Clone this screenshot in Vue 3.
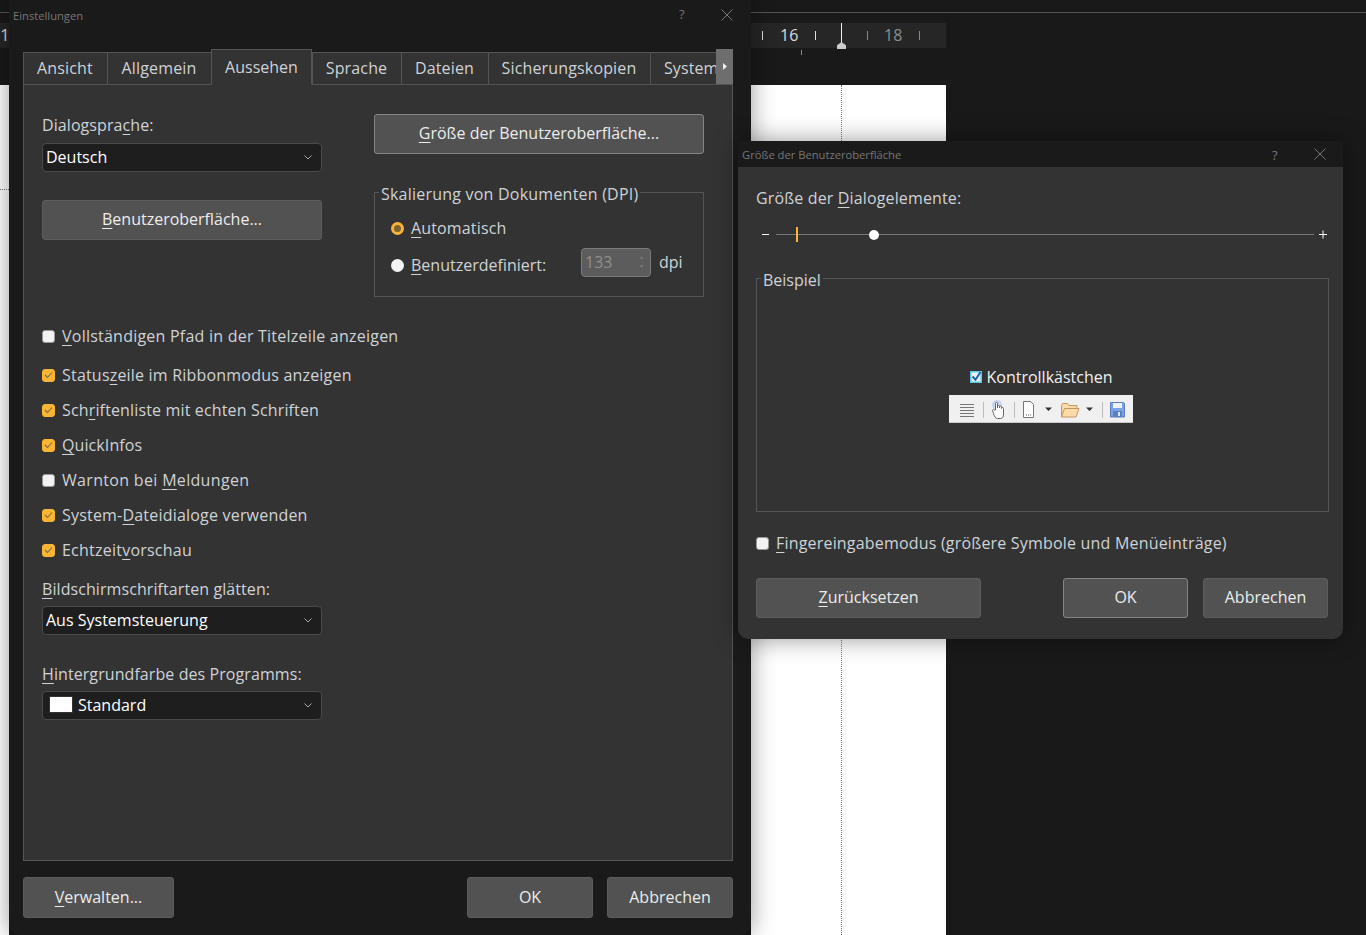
<script setup>
const tabs = [
  { label: 'Ansicht', w: 84 },
  { label: 'Allgemein', w: 104 },
  { label: 'Aussehen', w: 101, active: true },
  { label: 'Sprache', w: 89 },
  { label: 'Dateien', w: 87 },
  { label: 'Sicherungskopien', w: 162 },
  { label: 'System', w: 66, clip: true }
]
const checks = [
  { pre: 'Status', u: 'z', post: 'eile im Ribbonmodus anzeigen', on: true, ls: 0.2 },
  { pre: 'Sch', u: 'r', post: 'iftenliste mit echten Schriften', on: true, ls: 0.15 },
  { pre: '', u: 'Q', post: 'uickInfos', on: true, ls: 0.1 },
  { pre: 'Warnton bei ', u: 'M', post: 'eldungen', on: false, ls: 0.32 },
  { pre: 'System-', u: 'D', post: 'ateidialoge verwenden', on: true, ls: 0.2 },
  { pre: 'Echtzeit', u: 'v', post: 'orschau', on: true, ls: 0.23 }
]
</script>

<template>
  <div class="desk">
    <div class="topline"></div>
    <div class="ruler left-ruler"><span>1</span></div>
    <div class="page left-page"><i class="hdots"></i></div>

    <div class="topline right-line"></div>
    <div class="ruler main-ruler">
      <i class="tk" style="left:11px"></i><span class="num" style="left:29px">16</span>
      <i class="tk" style="left:64px"></i><i class="cursor"></i><i class="marker"></i>
      <i class="tk dim" style="left:116px"></i><span class="num dim" style="left:133px">18</span>
      <i class="tk dim" style="left:168px"></i>
    </div>
    <i class="undertick"></i>
    <div class="page main-page"><i class="vdots"></i></div>

    <section class="win settings">
      <header class="titlebar">
        <span class="title">Einstellungen</span>
        <span class="help">?</span>
        <svg class="close" width="12" height="12" viewBox="0 0 12 12"><path d="M.5.5l11 11M11.5.5l-11 11" stroke="#777" fill="none"/></svg>
      </header>

      <nav class="tabs">
        <div v-for="t in tabs" :key="t.label" class="tab" :class="{ active: t.active, clip: t.clip }" :style="{ width: t.w + 'px' }"><span>{{ t.label }}</span></div>
        <div class="tabscroll"><svg width="4" height="7" viewBox="0 0 4 7"><path d="M0 0l4 3.500-4 3.500z" fill="#eee"/></svg></div>
      </nav>

      <div class="pane">
        <div class="toprow">
          <div class="col-left">
            <label class="lbl">Dialogspra<u>c</u>he:</label>
            <div class="select lang">Deutsch<svg class="chev" width="8" height="5" viewBox="0 0 8 5"><path d="M.5.5L4 4 7.5.5" stroke="#aaa" fill="none"/></svg></div>
            <button class="btn ui-btn"><u>B</u>enutzeroberfläche...</button>
          </div>
          <div class="col-right">
            <button class="btn default size-btn"><u>G</u>röße der Benutzeroberfläche...</button>
            <fieldset class="group dpi">
              <legend>Skalierung von Dokumenten (DPI)</legend>
              <div class="radio-row first"><i class="radio on"></i><span><u>A</u>utomatisch</span></div>
              <div class="radio-row second">
                <i class="radio"></i><span class="custom"><u>B</u>enutzerdefiniert:</span>
                <div class="spin">133<svg width="7" height="20" viewBox="0 0 7 20"><path d="M1 7l2.500-3L6 7zM1 13l2.500 3L6 13z" fill="#727272"/></svg></div>
                <span class="unit">dpi</span>
              </div>
            </fieldset>
          </div>
        </div>

        <div class="check-row path"><i class="check"></i><span><u>V</u>ollständigen Pfad in der Titelzeile anzeigen</span></div>
        <div class="checks">
          <div v-for="c in checks" :key="c.pre + c.u" class="check-row" :style="{ letterSpacing: c.ls + 'px' }">
            <i class="check" :class="{ on: c.on }"><svg v-if="c.on" width="9" height="8" viewBox="0 0 9 8"><path d="M1 4l2.500 2.500L8 1.500" stroke="#7a6a45" stroke-width="1.100" fill="none"/></svg></i>
            <span>{{ c.pre }}<u>{{ c.u }}</u>{{ c.post }}</span>
          </div>
        </div>

        <label class="lbl smooth"><u>B</u>ildschirmschriftarten glätten:</label>
        <div class="select wide">Aus Systemsteuerung<svg class="chev" width="8" height="5" viewBox="0 0 8 5"><path d="M.5.5L4 4 7.5.5" stroke="#aaa" fill="none"/></svg></div>

        <label class="lbl bgc"><u>H</u>intergrundfarbe des Programms:</label>
        <div class="select wide"><i class="swatch"></i>Standard<svg class="chev" width="8" height="5" viewBox="0 0 8 5"><path d="M.5.5L4 4 7.5.5" stroke="#aaa" fill="none"/></svg></div>
      </div>

      <footer class="foot">
        <button class="btn manage"><u>V</u>erwalten...</button>
        <span class="spacer"></span>
        <button class="btn ok">OK</button>
        <button class="btn ok">Abbrechen</button>
      </footer>
    </section>

    <section class="win sizer">
      <header class="titlebar small">
        <span class="title">Größe der Benutzeroberfläche</span>
        <span class="help">?</span>
        <svg class="close" width="12" height="12" viewBox="0 0 12 12"><path d="M.5.5l11 11M11.5.5l-11 11" stroke="#777" fill="none"/></svg>
      </header>
      <div class="sizer-body">
        <label class="lbl sz">Größe der <u>D</u>ialogelemente:</label>
        <div class="slider">
          <i class="minus"></i>
          <div class="track"><i class="mark"></i><i class="thumb"></i></div>
          <svg width="9" height="9" viewBox="0 0 9 9"><path d="M0 4.500h8M4 .5v8" stroke="#fff" fill="none"/></svg>
        </div>
        <fieldset class="group sample">
          <legend>Beispiel</legend>
          <div class="sample-in">
            <div class="sample-check">
              <svg width="12" height="12" viewBox="0 0 12 12"><rect width="12" height="12" fill="#5cc8ec"/><rect x="1.500" y="1.500" width="9" height="9" fill="#e8f6fb"/><path d="M2.500 5.500l3 3.200L10.500 1" stroke="#1f5fa8" stroke-width="2" fill="none"/></svg>
              <span>Kontrollkästchen</span>
            </div>
            <svg class="toolbar" width="184" height="28" viewBox="0 0 184 28">
              <rect width="184" height="28" fill="#f0f0f0"/>
              <rect y="27" width="184" height="1" fill="#c9c9c9"/>
              <path d="M11 9.500h14M11 12.500h14M11 15.500h14M11 18.500h14M11 21.500h14" stroke="#777" fill="none"/>
              <path d="M34.500 7v16M65.500 7v16M153.500 7v16" stroke="#bbb" fill="none"/>
              <circle cx="48" cy="10" r="5" fill="#c8d4f4"/>
              <path d="M46.500 15V8.500a1 1 0 012 0V13v-1.500a1 1 0 012 0V13v-1a1 1 0 012 0v1.500a1 1 0 012 0V19c0 3-1 4.500-3 4.500h-3c-2 0-3-2-4-5l-1-3c0-1 1-1.500 2-.5z" fill="#fff" stroke="#666"/>
              <path d="M74.500 6.500h7l3 3v13h-10z" fill="#fff" stroke="#777"/>
              <path d="M77 20h1M79 20h1M81 20h1" stroke="#555"/>
              <path d="M96 12.500h7l-3.500 3.500zM137 12.500h7l-3.500 3.500z" fill="#333"/>
              <path d="M112.500 22V10.500l1-2h5l1.500 2h8v3M112.500 22l3-8.500h14.500l-3 8.500z" fill="#fbdca8" stroke="#c49660"/>
              <path d="M161.500 7.500h13l1 1v13.500h-14z" fill="#7ba3e4" stroke="#5c7fc2"/>
              <rect x="164" y="8" width="9" height="5" fill="#eef2fb"/>
              <rect x="164" y="16" width="9" height="6" fill="#5c7fc2"/>
              <rect x="169" y="17" width="2" height="4" fill="#dfe7f5"/>
            </svg>
          </div>
        </fieldset>
        <div class="check-row finger"><i class="check"></i><span><u>F</u>ingereingabemodus (größere Symbole und Menüeinträge)</span></div>
        <div class="sizer-foot">
          <button class="btn reset"><u>Z</u>urücksetzen</button>
          <span class="spacer"></span>
          <button class="btn default okb">OK</button>
          <button class="btn okb">Abbrechen</button>
        </div>
      </div>
    </section>
  </div>
</template>

<style>
html, body { margin: 0; background: #161616; }
</style>

<style scoped>
.desk {
  position: relative; width: 1366px; height: 935px; overflow: hidden;
  background: #191919; font-family: "Open Sans", "Noto Sans", sans-serif; font-size: 16px; color: #cfd2d6;
}
u { text-underline-offset: 3px; text-decoration-thickness: 1px; }
.topline { position: absolute; left: 0; top: 12px; width: 9px; height: 1px; background: #555; }
.right-line { left: 751px; width: 615px; }
.ruler { position: absolute; top: 23px; height: 25px; background: #262626; color: #ddd; }
.left-ruler { left: 0; width: 9px; line-height: 24px; font-size: 17px; }
.main-ruler { left: 751px; width: 195px; }
.tk { position: absolute; top: 8px; width: 1px; height: 9px; background: #ddd; }
.tk.dim { background: #888; }
.num { position: absolute; top: 0; line-height: 24px; font-size: 16px; color: #dcdcdc; }
.num.dim { color: #8d8d8d; }
.cursor { position: absolute; left: 90px; top: 0; width: 1px; height: 21px; background: #eee; }
.marker { position: absolute; left: 86px; top: 19px; width: 9px; height: 7px; background: #ccc; clip-path: polygon(50% 0, 100% 45%, 100% 100%, 0 100%, 0 45%); }
.undertick { position: absolute; left: 801px; top: 50px; width: 1px; height: 5px; background: #888; }
.page { position: absolute; top: 85px; bottom: 0; background: #fff; }
.left-page { left: 0; width: 9px; }
.hdots { position: absolute; left: 0; top: 104px; width: 9px; border-top: 1px dotted #777; }
.main-page { left: 751px; width: 195px; }
.vdots { position: absolute; left: 90px; top: 0; bottom: 0; border-left: 1px dotted #777; }

.win { position: absolute; display: flex; flex-direction: column; box-sizing: border-box; }
.settings {
  left: 9px; top: 0; width: 742px; height: 935px; padding: 0 18px 0 14px; background: #1a1a1a;
  border-radius: 0 0 10px 10px; box-shadow: 0 0 24px rgba(0,0,0,.4);
}
.titlebar { display: flex; align-items: center; height: 31px; margin-bottom: 18px; flex: none; position: relative; }
.title { font-size: 11.200px; color: #777; margin-left: -10px; }
.help { position: absolute; left: 656px; top: 5px; font-size: 13px; color: #777; }
.close { position: absolute; left: 698px; top: 9px; }

.tabs { display: flex; align-items: flex-end; height: 36px; flex: none; position: relative; z-index: 1; margin-bottom: -1px; width: 710px; }
.tab {
  box-sizing: border-box; height: 33px; background: #333; border: 1px solid #555; border-right-width: 0;
  color: #cfd2d6; line-height: 30px; text-align: center; white-space: nowrap; overflow: hidden; flex: none; padding-right: 1px; letter-spacing: .15px;
}
.tab.clip { text-align: left; padding: 0 0 0 13px; letter-spacing: .1px; }
.tab.active { height: 36px; border-bottom-color: #333; border-right-width: 1px; line-height: 34px; padding-right: 0; letter-spacing: 0; }
.tabscroll { width: 17px; height: 35px; margin-bottom: 1px; background: #6e6e6e; display: flex; align-items: center; justify-content: center; flex: none; }

.pane { box-sizing: border-box; width: 710px; height: 777px; flex: none; border: 1px solid #555; background: #333; padding: 0 18px; }
.toprow { display: flex; gap: 52px; }
.col-left { width: 280px; display: flex; flex-direction: column; align-items: stretch; }
.col-right { width: 330px; display: flex; flex-direction: column; }
.lbl { display: block; line-height: 22px; color: #cfd2d6; letter-spacing: .08px; }
.col-left .lbl { margin-top: 29px; }
.select {
  position: relative; box-sizing: border-box; height: 29px; line-height: 26px; border: 1px solid #4a4a4a; border-radius: 4px;
  background: #1e1e1e; color: #fff; padding: 0 0 2px 3px; display: flex; align-items: center; margin-top: 6px;
}
.select.lang { margin-top: 7px; }
.select.wide { width: 280px; }
.chev { position: absolute; right: 9px; top: 11px; }
.btn {
  box-sizing: border-box; height: 40px; border: 1px solid #5c5c5c; border-radius: 3px; background: #525252; color: #ececec;
  font: inherit; padding: 0 0 2px; cursor: default;
}
.btn.default { border-color: #858585; }
.ui-btn { margin-top: 28px; }
.size-btn { margin-top: 29px; }
.group { margin: 0; padding: 0; border: 1px solid #555; min-width: 0; box-sizing: border-box; }
.group legend { margin-left: 4px; padding: 0 2px; line-height: 20px; color: #cfd2d6; position: relative; top: 2px; letter-spacing: .22px; }
.dpi { height: 115px; margin-top: 28px; }
.radio-row { display: flex; align-items: center; height: 24px; padding-left: 16px; }
.radio-row.first { margin-top: 14px; letter-spacing: .15px; }
.radio-row.second { margin-top: 13px; position: relative; }
.radio { width: 13px; height: 13px; border-radius: 50%; background: #f4f4f4; margin-right: 7px; flex: none; box-sizing: border-box; }
.radio.on { background: #7a6232; border: 3px solid #fab336; }
.custom { width: 170px; }
.spin {
  box-sizing: border-box; width: 70px; height: 29px; margin-top: -6px; background: #5c5c5c; border: 1px solid #7a7a7a; border-radius: 4px; color: #8f8f8f;
  padding: 0 5px 0 3px; line-height: 25px; display: flex; justify-content: space-between; align-items: center;
}
.unit { margin-left: 8px; margin-top: -6px; }

.check-row { display: flex; align-items: center; height: 22px; white-space: nowrap; letter-spacing: .23px; }
.finger { letter-spacing: .19px; }
.check { box-sizing: border-box; width: 13px; height: 13px; border-radius: 3px; background: #f2f2f2; border: 1px solid #999; margin-right: 7px; flex: none; display: flex; align-items: center; justify-content: center; }
.check.on { background: #fbb534; border-color: #fbb534; }
.path { margin-top: 28px; }
.checks { display: flex; flex-direction: column; gap: 13px; margin-top: 17px; }
.smooth { margin-top: 17px; }
.bgc { margin-top: 28px; }
.swatch { width: 22px; height: 15px; background: #fff; border: 1px solid #333; margin: 0 5px 0 3px; box-sizing: content-box; }

.foot { display: flex; gap: 14px; margin-top: 16px; }
.foot .btn { height: 41px; }
.manage { width: 151px; }
.ok { width: 126px; }
.spacer { flex: 1; }

.sizer { left: 738px; top: 141px; width: 605px; height: 498px; background: #1a1a1a; border-radius: 0 0 10px 10px; box-shadow: 0 0 24px rgba(0,0,0,.4); }
.titlebar.small { height: 26px; margin: 0; }
.sizer .title { margin-left: 4px; padding-top: 1px; }
.sizer .help { left: 534px; top: 5px; }
.sizer .close { left: 576px; top: 7px; }
.sizer-body { flex: 1; background: #333; padding: 20px 14px 0 18px; border-radius: 0 0 10px 10px; display: flex; flex-direction: column; }
.lbl.sz { letter-spacing: .14px; }
.slider { display: flex; align-items: center; height: 16px; margin-top: 17px; margin-left: 6px; }
.minus { width: 7px; height: 1px; background: #fff; margin-right: 7px; }
.track { position: relative; width: 538px; height: 1px; background: #777; margin-right: 5px; }
.mark { position: absolute; left: 20px; top: -7px; width: 2px; height: 15px; background: #fbb534; }
.thumb { position: absolute; left: 93px; top: -4px; width: 10px; height: 10px; border-radius: 50%; background: #fff; }
.sample { height: 244px; width: 573px; margin-top: 26px; }
.sample legend { margin-left: 4px; letter-spacing: 0; }
.sample-in { display: flex; flex-direction: column; align-items: center; padding-top: 78px; }
.sample-check { display: flex; align-items: center; gap: 4px; color: #f0f0f0; height: 22px; margin-right: 2px; }
.toolbar { display: block; margin: 7px 3px 0 0; }
.finger { margin-top: 20px; }
.sizer-foot { display: flex; gap: 15px; margin-top: 24px; width: 572px; }
.reset { width: 225px; }
.okb { width: 125px; }
</style>
